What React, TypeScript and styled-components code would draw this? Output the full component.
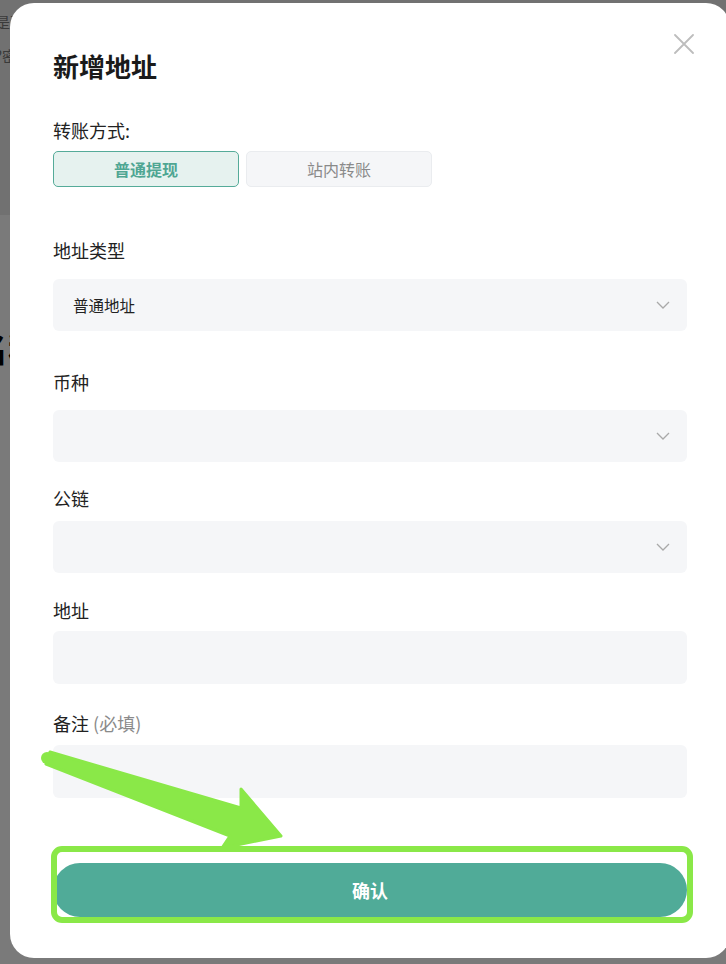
import styled, { createGlobalStyle } from "styled-components";

const GlobalStyle = createGlobalStyle`
  html, body {
    margin: 0;
    padding: 0;
  }
  body {
    font-family: "Noto Sans CJK SC", "Noto Sans", sans-serif;
    background: #fff;
    overflow: hidden;
  }
`;

const Page = styled.div`
  position: relative;
  width: 726px;
  height: 964px;
  overflow: hidden;
  background: #fff;
`;

const PageHeader = styled.div`
  height: 215px;
  background: #ececec;
  padding-top: 12px;
  box-sizing: border-box;
`;

const GhostLine = styled.div`
  margin-left: -5px;
  font-size: 15px;
  line-height: 20px;
  color: #7a7a7a;
  white-space: nowrap;
  margin-bottom: 14px;
`;

const GhostTitle = styled.div`
  margin: 108px 0 0 -26px;
  font-size: 34px;
  font-weight: 700;
  color: #000;
  white-space: nowrap;
`;

const Mask = styled.div`
  position: absolute;
  inset: 0;
  background: rgba(0, 0, 0, 0.52);
`;

const Modal = styled.div`
  position: absolute;
  left: 10px;
  top: 3px;
  width: 720px;
  height: 955px;
  background: #fff;
  border-radius: 24px;
  box-sizing: border-box;
  padding: 47px 43px 0;
  display: flex;
  flex-direction: column;
`;

const CloseButton = styled.button`
  position: absolute;
  top: 30px;
  right: 36px;
  width: 21px;
  height: 21px;
  padding: 0;
  border: none;
  background: transparent;
  display: flex;
  align-items: center;
  justify-content: center;
`;

const Title = styled.h2`
  margin: 0;
  font-size: 26px;
  line-height: 32px;
  font-weight: 700;
  color: #1a1a1a;
`;

const Label = styled.div<{ $top: number }>`
  margin-top: ${(p) => p.$top}px;
  font-size: 18px;
  line-height: 22px;
  color: #222;
`;

const Hint = styled.span`
  color: #8a8a8a;
`;

const TabRow = styled.div`
  margin-top: 10px;
  display: flex;
  gap: 7px;
`;

const Tab = styled.button<{ $active?: boolean }>`
  width: 186px;
  height: 36px;
  box-sizing: border-box;
  border-radius: 5px;
  border: 1px solid ${(p) => (p.$active ? "#55ab99" : "#eaecef")};
  background: ${(p) => (p.$active ? "#e6f2ef" : "#f5f6f8")};
  color: ${(p) => (p.$active ? "#4fa693" : "#8a8a8a")};
  font-family: inherit;
  font-size: 16px;
  font-weight: ${(p) => (p.$active ? 600 : 400)};
  padding: 0;
`;

const SelectBox = styled.div<{ $top: number }>`
  margin-top: ${(p) => p.$top}px;
  height: 52px;
  border-radius: 6px;
  background: #f5f6f8;
  display: flex;
  align-items: center;
  justify-content: space-between;
  padding: 0 17px 0 20px;
`;

const SelectValue = styled.span`
  font-size: 15.5px;
  color: #222;
`;

const TextInput = styled.input<{ $top: number }>`
  margin-top: ${(p) => p.$top}px;
  height: 53px;
  box-sizing: border-box;
  border: none;
  outline: none;
  border-radius: 6px;
  background: #f5f6f8;
  padding: 0 20px;
  font-family: inherit;
  font-size: 15px;
`;

const ConfirmButton = styled.button`
  margin-top: 65px;
  height: 54px;
  border: none;
  border-radius: 27px;
  background: #50ab98;
  color: #fff;
  font-family: inherit;
  font-size: 18px;
  font-weight: 600;
`;

const Annotation = styled.svg`
  position: absolute;
  left: 0;
  top: 0;
  pointer-events: none;
`;

function Chevron() {
  return (
    <svg width="14" height="8" viewBox="0 0 14 8">
      <polyline
        points="1,1 7,7 13,1"
        fill="none"
        stroke="#a9a9a9"
        strokeWidth="1.3"
      />
    </svg>
  );
}

function Select(props: { top: number; value?: string }) {
  return (
    <SelectBox $top={props.top}>
      <SelectValue>{props.value}</SelectValue>
      <Chevron />
    </SelectBox>
  );
}

export default function App() {
  return (
    <Page>
      <GlobalStyle />
      <PageHeader>
        <GhostLine>是否确认</GhostLine>
        <GhostLine>?密码</GhostLine>
      </PageHeader>
      <GhostTitle>名称</GhostTitle>
      <Mask />
      <Modal>
        <CloseButton aria-label="关闭">
          <svg width="20" height="20" viewBox="0 0 20 20">
            <path
              d="M1 1 L19 19 M19 1 L1 19"
              stroke="#bdbdbd"
              strokeWidth="1.8"
              strokeLinecap="round"
            />
          </svg>
        </CloseButton>
        <Title>新增地址</Title>

        <Label $top={37}>转账方式:</Label>
        <TabRow>
          <Tab $active>普通提现</Tab>
          <Tab>站内转账</Tab>
        </TabRow>

        <Label $top={52}>地址类型</Label>
        <Select top={18} value="普通地址" />

        <Label $top={40}>币种</Label>
        <Select top={17} />

        <Label $top={25}>公链</Label>
        <Select top={12} />

        <Label $top={26}>地址</Label>
        <TextInput $top={10} />

        <Label $top={28}>
          备注 <Hint>(必填)</Hint>
        </Label>
        <TextInput $top={11} />

        <ConfirmButton>确认</ConfirmButton>
      </Modal>

      <Annotation width="726" height="964" viewBox="0 0 726 964">
        <path
          d="M50 752 L241 808 L241 789 L281 836 L222 848 L230 836 L46 764 Z"
          fill="#8ae848"
          stroke="#8ae848"
          strokeWidth="3"
          strokeLinejoin="round"
        />
        <circle cx="47" cy="758" r="6" fill="#8ae848" />
        <rect
          x="54"
          y="849"
          width="636"
          height="71"
          rx="8"
          fill="none"
          stroke="#8ae848"
          strokeWidth="6"
        />
      </Annotation>
    </Page>
  );
}
